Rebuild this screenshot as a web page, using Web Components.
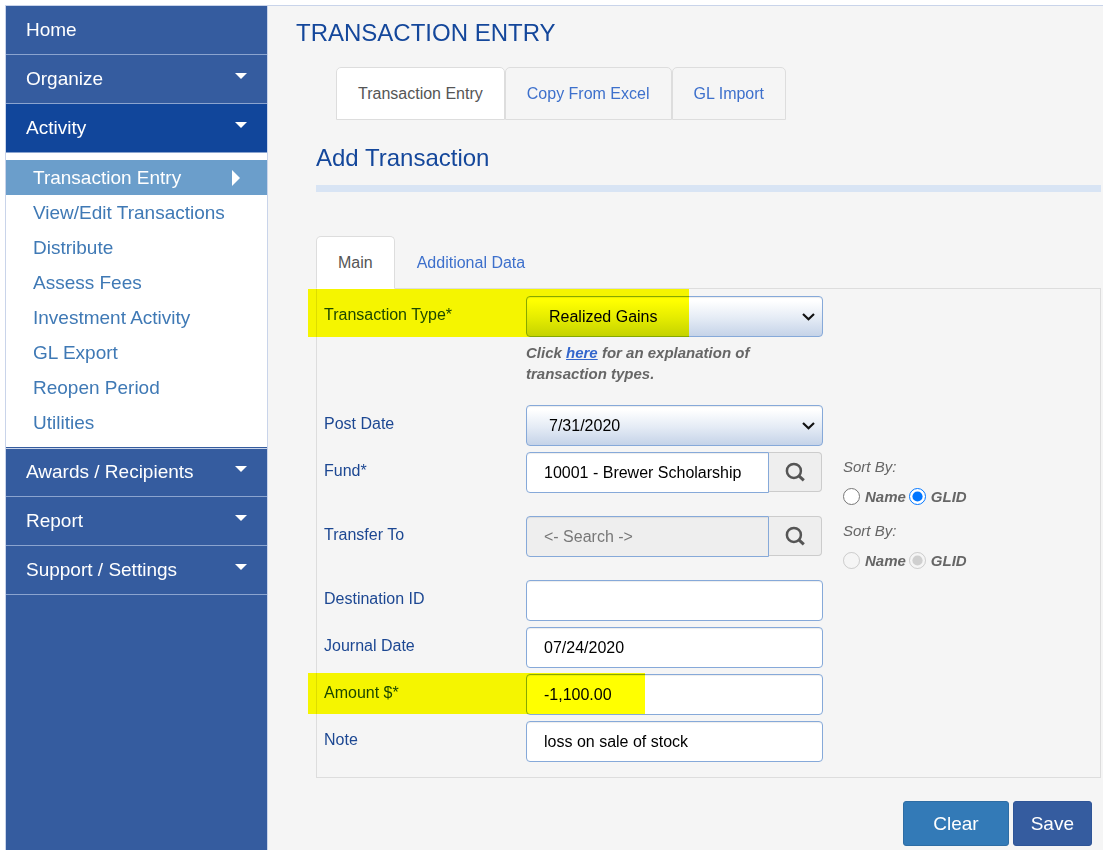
<!DOCTYPE html>
<html lang="en">
<head>
<meta charset="utf-8">
<meta name="viewport" content="width=device-width, initial-scale=1">
<title>Transaction Entry</title>
<style>
  body {
    margin: 0;
    background: #fff;
    font: 16px/22px "Liberation Sans", Arial, Helvetica, sans-serif;
    --navy: #14479b;
    --blue: #355c9f;
    --link: #3d70cc;
    --line: #ddd;
    --field-line: #86a9d9;
  }
</style>
</head>
<body>

<app-shell>
  <side-nav slot="nav">
    <nav-group label="Home" href="#home"></nav-group>
    <nav-group label="Organize"></nav-group>
    <nav-group label="Activity" open>
      <nav-link href="#entry" current>Transaction Entry</nav-link>
      <nav-link href="#view">View/Edit Transactions</nav-link>
      <nav-link href="#distribute">Distribute</nav-link>
      <nav-link href="#fees">Assess Fees</nav-link>
      <nav-link href="#investment">Investment Activity</nav-link>
      <nav-link href="#export">GL Export</nav-link>
      <nav-link href="#reopen">Reopen Period</nav-link>
      <nav-link href="#utilities">Utilities</nav-link>
    </nav-group>
    <nav-group label="Awards / Recipients"></nav-group>
    <nav-group label="Report"></nav-group>
    <nav-group label="Support / Settings"></nav-group>
  </side-nav>

  <transaction-page></transaction-page>
</app-shell>

<script>
/* ==========================================================================
   Helpers
   ========================================================================== */

function attach(el, html) {
  const root = el.attachShadow({ mode: 'open' });
  const template = document.createElement('template');
  template.innerHTML = html;
  root.appendChild(template.content.cloneNode(true));
  return root;
}

/* ==========================================================================
   <app-shell>: sidebar + content
   ========================================================================== */

class AppShell extends HTMLElement {
  constructor() {
    super();
    attach(this, `
<style>
  :host {
    display: flex;
    box-sizing: border-box;
    min-height: 100vh;
    padding: 5px 0 0 5px;
  }

  .nav {
    flex: none;
    display: flex;
    width: 261px;
    background: var(--blue);
    border: 1px solid #c9d4ea;
    border-bottom: 0;
  }

  ::slotted(side-nav) { flex: 1; }

  main {
    flex: 1;
    min-width: 0;
    background: #f5f5f5;
    border-top: 1px solid #c9d4ea;
  }
</style>
<div class="nav"><slot name="nav"></slot></div>
<main><slot></slot></main>
`);
  }
}

/* ==========================================================================
   <side-nav>, <nav-group>, <nav-link>
   ========================================================================== */

class SideNav extends HTMLElement {
  constructor() {
    super();
    attach(this, `
<style>
  :host { display: block; }
</style>
<nav aria-label="Main menu"><slot></slot></nav>
`);
  }
}

class NavGroup extends HTMLElement {
  constructor() {
    super();
    const label = this.getAttribute('label');
    const head = this.hasAttribute('href')
      ? `<a class="head" href="${this.getAttribute('href')}">${label}</a>`
      : `<button class="head" type="button" aria-expanded="${this.hasAttribute('open')}">
           <span>${label}</span><span class="caret"></span>
         </button>`;
    attach(this, `
<style>
  :host { display: block; }

  .head {
    display: flex;
    align-items: center;
    justify-content: space-between;
    box-sizing: border-box;
    width: 100%;
    height: 49px;
    margin: 0;
    padding: 0 20px;
    border: 0;
    border-bottom: 1px solid #8ba4cf;
    background: var(--blue);
    color: #fff;
    font: inherit;
    font-size: 19px;
    text-align: left;
    text-decoration: none;
    cursor: pointer;
  }

  :host([open]) .head { background: #11469b; }

  .caret {
    border: 6px solid transparent;
    border-top-color: #fff;
  }

  .items { display: none; }

  :host([open]) .items {
    display: block;
    padding: 7px 0;
    background: #fff;
    border-bottom: 1px solid var(--blue);
    box-shadow: 0 1px #c9d4ea;
    position: relative;
  }
</style>
${head}
<div class="items"><slot></slot></div>
`);
  }
}

class NavLink extends HTMLElement {
  constructor() {
    super();
    attach(this, `
<style>
  :host { display: block; }

  a {
    display: flex;
    align-items: center;
    justify-content: space-between;
    height: 35px;
    padding: 0 27px;
    color: #3f79b5;
    font-size: 19px;
    text-decoration: none;
  }

  :host([current]) a {
    background: #6b9ecb;
    color: #fff;
  }

  :host([current]) a::after {
    content: "";
    border: 8px solid transparent;
    border-left-color: #fff;
    border-right: 0;
  }
</style>
<a href="${this.getAttribute('href')}"><slot></slot></a>
`);
  }
}

/* ==========================================================================
   <tab-strip>, <tab-item>
   ========================================================================== */

class TabStrip extends HTMLElement {
  constructor() {
    super();
    attach(this, `
<style>
  :host { display: flex; }
</style>
<slot></slot>
`);
  }
}

class TabItem extends HTMLElement {
  constructor() {
    super();
    attach(this, `
<style>
  :host { display: block; }

  a {
    display: flex;
    align-items: center;
    box-sizing: border-box;
    height: 53px;
    padding: 0 21px;
    border: 1px solid transparent;
    border-radius: 5px 5px 0 0;
    color: var(--link);
    text-decoration: none;
  }

  :host([boxed]) a { border-color: var(--line); }

  :host([current]) a {
    position: relative;
    z-index: 1;
    background: #fff;
    border-color: var(--line);
    color: #555;
  }

  :host([current]:not([boxed])) a { border-bottom-color: #fff; }
</style>
<a href="${this.getAttribute('href')}"><slot></slot></a>
`);
  }
}

/* ==========================================================================
   <form-field>: label, control, optional help text and side column
   kind = text | select | lookup
   ========================================================================== */

class FormField extends HTMLElement {
  constructor() {
    super();
    const label = this.getAttribute('label');
    attach(this, `
<style>
  :host {
    display: grid;
    grid-template-columns: 202fr 297fr 277fr;
    align-items: start;
    position: relative;
  }

  label {
    padding-top: 8px;
    color: #1c4792;
  }

  input, select {
    display: block;
    box-sizing: border-box;
    width: 100%;
    height: 41px;
    margin: 0;
    padding: 0 17px;
    border: 1px solid var(--field-line);
    border-radius: 4px;
    background: #fff;
    box-shadow: inset 0 1px 1px rgba(0, 0, 0, .075);
    color: #000;
    font: inherit;
  }

  .select { display: grid; align-items: center; }
  .select > * { grid-area: 1 / 1; }

  select {
    appearance: none;
    padding: 0 22px;
    background: linear-gradient(#fff 10%, #e4ebf5 55%, #c5d3e8);
  }

  .select svg {
    justify-self: end;
    margin-right: 8px;
    pointer-events: none;
  }

  .lookup { display: flex; align-items: start; padding-right: 1px; }
  .lookup input { flex: 1; min-width: 0; border-radius: 4px 0 0 4px; }
  input:disabled { background: #eee; }
  input::placeholder { color: #777; }

  .lookup button {
    display: flex;
    align-items: center;
    justify-content: center;
    box-sizing: border-box;
    width: 53px;
    height: 40px;
    padding: 0;
    border: 1px solid #ccc;
    border-left: 0;
    border-radius: 0 4px 4px 0;
    background: #eee;
  }

  ::slotted([slot=help]) {
    margin: 5px 0 15px;
    font-size: 15px;
    font-style: italic;
    font-weight: bold;
    line-height: 21px;
  }

  ::slotted([slot=side]) { padding-left: 20px; }

  /* marker-pen stroke over the label and the start of the control */
  .mark { display: none; }

  :host([marked]) .mark {
    display: block;
    position: absolute;
    top: var(--mark-top, 0);
    left: -16px;
    width: var(--mark-width, 337px);
    height: var(--mark-height, 41px);
    background: #ff0;
    mix-blend-mode: multiply;
    pointer-events: none;
  }
</style>
<label for="control">${label}</label>
<div>
  ${this.control()}
  <slot name="help"></slot>
</div>
<slot name="side"></slot>
<div class="mark"></div>
`);
  }

  control() {
    const value = this.getAttribute('value') || '';
    const disabled = this.hasAttribute('disabled') ? 'disabled' : '';
    const placeholder = this.getAttribute('placeholder') || '';
    const input = `<input id="control" type="text" value="${value}" placeholder="${placeholder}" ${disabled}>`;

    switch (this.getAttribute('kind')) {
      case 'select':
        return `
<div class="select">
  <select id="control"><option>${value}</option></select>
  <svg width="13" height="9" viewBox="0 0 13 9" aria-hidden="true">
    <path d="M1 2 6.500 7.200 12 2" fill="none" stroke="#111" stroke-width="2.200"/>
  </svg>
</div>`;
      case 'lookup':
        return `
<div class="lookup">
  ${input}
  <button type="button" aria-label="Search">
    <svg width="20" height="20" viewBox="0 0 20 20" fill="none" stroke="#555" aria-hidden="true">
      <circle cx="8.900" cy="8.900" r="7" stroke-width="2.500"/>
      <path d="m13.600 13.600 5.200 4.800" stroke-width="3"/>
    </svg>
  </button>
</div>`;
      default:
        return input;
    }
  }
}

/* ==========================================================================
   <sort-choice>
   ========================================================================== */

class SortChoice extends HTMLElement {
  constructor() {
    super();
    const disabled = this.hasAttribute('disabled') ? 'disabled' : '';
    attach(this, `
<style>
  :host { display: block; }

  fieldset {
    min-width: 0;
    height: 58px;
    box-sizing: border-box;
    margin: 0;
    padding: 0;
    border: 0;
    color: #666;
    font-size: 15px;
    font-style: italic;
    line-height: 21px;
  }

  legend { padding: 4px 0 9px; }

  .options { display: flex; align-items: center; gap: 3px; }

  label {
    display: flex;
    align-items: center;
    gap: 5px;
    font-weight: bold;
  }

  input { width: 17px; height: 17px; margin: 0; }
</style>
<fieldset>
  <legend>Sort By:</legend>
  <div class="options">
    <label><input type="radio" name="sort" ${disabled}>Name</label>
    <label><input type="radio" name="sort" checked ${disabled}>GLID</label>
  </div>
</fieldset>
`);
  }
}

/* ==========================================================================
   <action-button>
   ========================================================================== */

class ActionButton extends HTMLElement {
  constructor() {
    super();
    attach(this, `
<style>
  :host { display: block; }

  button {
    height: 45px;
    padding: 0 29px;
    border: 1px solid #2e6da4;
    border-radius: 3px;
    background: #337ab7;
    color: #fff;
    font: inherit;
    font-size: 19px;
    cursor: pointer;
  }

  :host([primary]) button {
    padding: 0 17px;
    border-color: #2f5597;
    background: var(--blue);
  }
</style>
<button type="button"><slot></slot></button>
`);
  }
}

/* ==========================================================================
   <transaction-page>
   ========================================================================== */

class TransactionPage extends HTMLElement {
  constructor() {
    super();
    attach(this, `
<style>
  :host {
    display: block;
    padding: 13px 2px 4px 48px;
  }

  h1, h2 {
    margin: 0;
    color: var(--navy);
    font-size: 24px;
    font-weight: normal;
    line-height: 28px;
  }

  h1 {
    margin-left: -20px;
    text-transform: uppercase;
  }

  .pages { margin: 20px 20px 24px; }

  h2 {
    margin-bottom: 44px;
    padding-bottom: 13px;
    border-bottom: 7px solid #d8e4f4;
  }

  form {
    display: flex;
    flex-direction: column;
    gap: 6px;
    margin-top: -1px;
    padding: 7px 0 15px 7px;
    border: 1px solid var(--line);
  }

  .type {
    --mark-top: -7px;
    --mark-width: 381px;
    --mark-height: 48px;
  }

  .amount { --mark-top: -1px; }

  p { color: #666; }
  p a { color: #36c; }

  .actions {
    display: flex;
    justify-content: flex-end;
    gap: 4px;
    margin-top: 23px;
    padding-right: 9px;
  }
</style>

<h1>Transaction Entry</h1>

<tab-strip class="pages">
  <tab-item boxed current href="#entry">Transaction Entry</tab-item>
  <tab-item boxed href="#copy">Copy From Excel</tab-item>
  <tab-item boxed href="#import">GL Import</tab-item>
</tab-strip>

<h2>Add Transaction</h2>

<tab-strip>
  <tab-item current href="#main">Main</tab-item>
  <tab-item href="#additional">Additional Data</tab-item>
</tab-strip>

<form>
  <form-field class="type" kind="select" label="Transaction Type*" value="Realized Gains" marked>
    <p slot="help">Click <a href="#types">here</a> for an explanation of<br>transaction types.</p>
  </form-field>
  <form-field kind="select" label="Post Date" value="7/31/2020"></form-field>
  <form-field kind="lookup" label="Fund*" value="10001 - Brewer Scholarship">
    <sort-choice slot="side"></sort-choice>
  </form-field>
  <form-field kind="lookup" label="Transfer To" placeholder="&lt;- Search -&gt;" disabled>
    <sort-choice slot="side" disabled></sort-choice>
  </form-field>
  <form-field label="Destination ID"></form-field>
  <form-field label="Journal Date" value="07/24/2020"></form-field>
  <form-field class="amount" label="Amount $*" value="-1,100.00" marked></form-field>
  <form-field label="Note" value="loss on sale of stock"></form-field>
</form>

<div class="actions">
  <action-button>Clear</action-button>
  <action-button primary>Save</action-button>
</div>
`);
  }
}

customElements.define('app-shell', AppShell);
customElements.define('side-nav', SideNav);
customElements.define('nav-group', NavGroup);
customElements.define('nav-link', NavLink);
customElements.define('tab-strip', TabStrip);
customElements.define('tab-item', TabItem);
customElements.define('form-field', FormField);
customElements.define('sort-choice', SortChoice);
customElements.define('action-button', ActionButton);
customElements.define('transaction-page', TransactionPage);
</script>
</body>
</html>
